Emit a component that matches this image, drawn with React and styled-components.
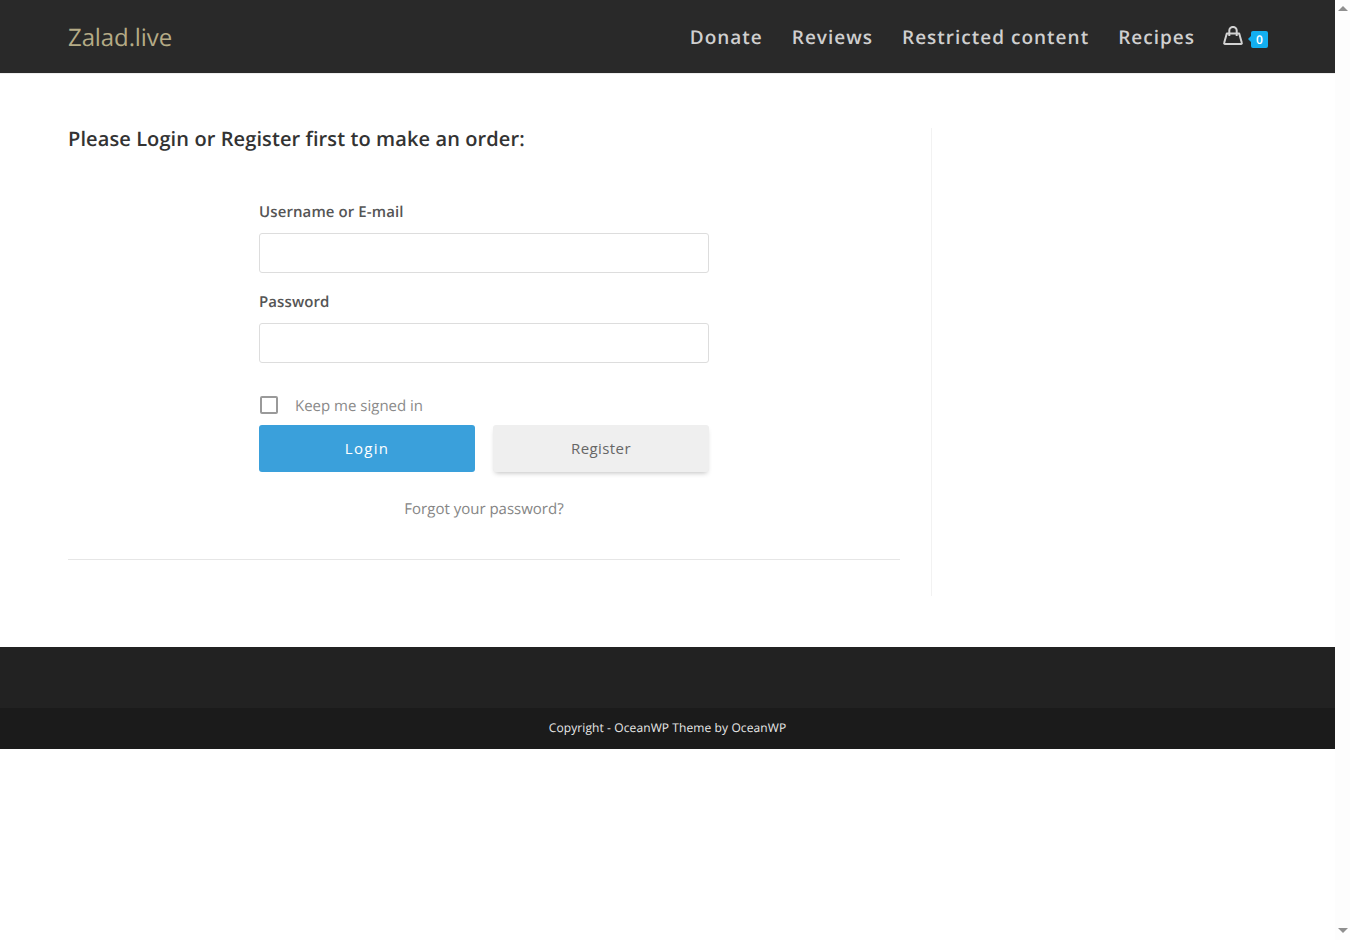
import React from "react";
import styled, { createGlobalStyle } from "styled-components";

const GlobalStyle = createGlobalStyle`
  html, body {
    margin: 0;
    padding: 0;
    height: 100%;
    overflow: hidden;
    background: #fff;
    font-family: "Open Sans", "Liberation Sans", sans-serif;
    text-rendering: geometricPrecision;
  }
  * {
    box-sizing: border-box;
  }
`;

const Page = styled.div`
  display: flex;
  width: 1350px;
  height: 940px;
`;

const Main = styled.div`
  width: 1335px;
  display: flex;
  flex-direction: column;
`;

const ScrollTrack = styled.div`
  width: 15px;
  display: flex;
  flex-direction: column;
  justify-content: space-between;
  align-items: center;
  padding: 6px 0 7px;
  background: #fdfdfd;
`;

const ScrollArrow = styled.span`
  width: 0;
  height: 0;
  border-left: 5px solid transparent;
  border-right: 5px solid transparent;
  ${(p) =>
    p.$down ? "border-top: 5px solid #8f8f8f;" : "border-bottom: 5px solid #8f8f8f;"}
`;

const Header = styled.header`
  height: 74px;
  padding: 0 67px 0 68px;
  display: flex;
  align-items: center;
  justify-content: space-between;
  background: #292929;
  border-bottom: 1px solid #eee;
`;

const Logo = styled.a`
  padding-top: 2px;
  font-size: 24px;
  line-height: 1;
  letter-spacing: -0.1px;
  color: #b5ab86;
`;

const Nav = styled.nav`
  display: flex;
  align-items: center;
  gap: 29px;
`;

const NavLink = styled.a`
  font-size: 19px;
  font-weight: 600;
  letter-spacing: 1px;
  color: #cfcfcf;
`;

const Cart = styled.a`
  display: flex;
  align-items: center;
  gap: 8px;
  margin-left: -1px;
  color: #d2d2d2;
`;

const Bag = styled.svg`
  display: block;
  margin-bottom: 3px;
`;

const CartBadge = styled.span`
  position: relative;
  top: 3px;
  width: 17px;
  height: 17px;
  display: flex;
  align-items: center;
  justify-content: center;
  border-radius: 2px;
  background: #13aff0;
  color: #fff;
  font-size: 12px;
  font-weight: 600;
  &::before {
    content: "";
    position: absolute;
    left: -3px;
    top: 5px;
    border-top: 3px solid transparent;
    border-bottom: 3px solid transparent;
    border-right: 3px solid #13aff0;
  }
`;

const Content = styled.main`
  height: 573px;
  padding: 54px 68px 51px;
  display: flex;
`;

const Primary = styled.section`
  width: 832px;
  height: 431px;
  border-bottom: 1px solid #e6e6e6;
  box-sizing: content-box;
`;

const Sidebar = styled.aside`
  margin-left: 31px;
  width: 1px;
  background: #f2f2f2;
`;

const Title = styled.h2`
  margin: -1px 0 50px;
  font-size: 20px;
  line-height: 24px;
  font-weight: 600;
  letter-spacing: 0.1px;
  color: #333;
`;

const Form = styled.form`
  width: 450px;
  margin: 0 auto;
`;

const Label = styled.label`
  display: block;
  margin-bottom: 10px;
  font-size: 15px;
  line-height: 22px;
  font-weight: 600;
  letter-spacing: 0.1px;
  color: #555;
`;

const Field = styled.input`
  display: block;
  width: 100%;
  height: 40px;
  margin-bottom: 18px;
  border: 1px solid #ddd;
  border-radius: 3px;
  background: #fff;
`;

const KeepRow = styled.label`
  display: flex;
  align-items: center;
  gap: 17px;
  height: 24px;
  margin-top: 30px;
  margin-bottom: 8px;
  font-size: 15px;
  color: #8a8a8a;
`;

const KeepText = styled.span`
  padding-top: 2px;
`;

const Checkbox = styled.span`
  width: 18px;
  height: 18px;
  margin-left: 1px;
  border: 2px solid #9a9a9a;
  border-radius: 2px;
`;

const Buttons = styled.div`
  display: flex;
  justify-content: space-between;
`;

const Button = styled.button`
  width: 216px;
  height: 47px;
  padding: 0 0 2px;
  border: 0;
  border-radius: 3px;
  font-family: inherit;
  font-size: 15px;
  letter-spacing: ${(p) => (p.$primary ? "1.3px" : "0.4px")};
  color: ${(p) => (p.$primary ? "#fff" : "#666")};
  background: ${(p) => (p.$primary ? "#3aa0db" : "#efefef")};
  box-shadow: ${(p) => (p.$primary ? "none" : "0 3px 5px -2px rgba(0, 0, 0, 0.25)")};
`;

const Forgot = styled.a`
  display: block;
  margin-top: 25px;
  text-align: center;
  font-size: 15px;
  line-height: 24px;
  color: #858585;
`;

const Widgets = styled.div`
  height: 61px;
  background: #222;
`;

const Copyright = styled.footer`
  height: 41px;
  padding-bottom: 3px;
  display: flex;
  align-items: center;
  justify-content: center;
  background: #1b1b1b;
  color: #e8e8e8;
  font-size: 12px;
  letter-spacing: 0.1px;
`;

function BagIcon() {
  return (
    <Bag width="20" height="19" viewBox="0 0 20 19" fill="none" stroke="currentColor" strokeWidth="2">
      <path d="M3.8 7.4h12.4l2.6 9.4a.9.9 0 0 1-.9 1.2H2.1a.9.9 0 0 1-.9-1.2z" strokeLinejoin="round" />
      <path d="M6.3 10V4.6a3.7 3.7 0 0 1 7.4 0V10" />
    </Bag>
  );
}

function App() {
  return (
    <>
      <GlobalStyle />
      <Page>
        <Main>
          <Header>
            <Logo>Zalad.live</Logo>
            <Nav>
              <NavLink>Donate</NavLink>
              <NavLink>Reviews</NavLink>
              <NavLink>Restricted content</NavLink>
              <NavLink>Recipes</NavLink>
              <Cart>
                <BagIcon />
                <CartBadge>0</CartBadge>
              </Cart>
            </Nav>
          </Header>
          <Content>
            <Primary>
              <Title>Please Login or Register first to make an order:</Title>
              <Form>
                <Label>Username or E-mail</Label>
                <Field type="text" />
                <Label>Password</Label>
                <Field type="password" />
                <KeepRow>
                  <Checkbox />
                  <KeepText>Keep me signed in</KeepText>
                </KeepRow>
                <Buttons>
                  <Button type="button" $primary>Login</Button>
                  <Button type="button">Register</Button>
                </Buttons>
                <Forgot>Forgot your password?</Forgot>
              </Form>
            </Primary>
            <Sidebar />
          </Content>
          <Widgets />
          <Copyright>Copyright - OceanWP Theme by OceanWP</Copyright>
        </Main>
        <ScrollTrack>
          <ScrollArrow />
          <ScrollArrow $down />
        </ScrollTrack>
      </Page>
    </>
  );
}

export default App;
